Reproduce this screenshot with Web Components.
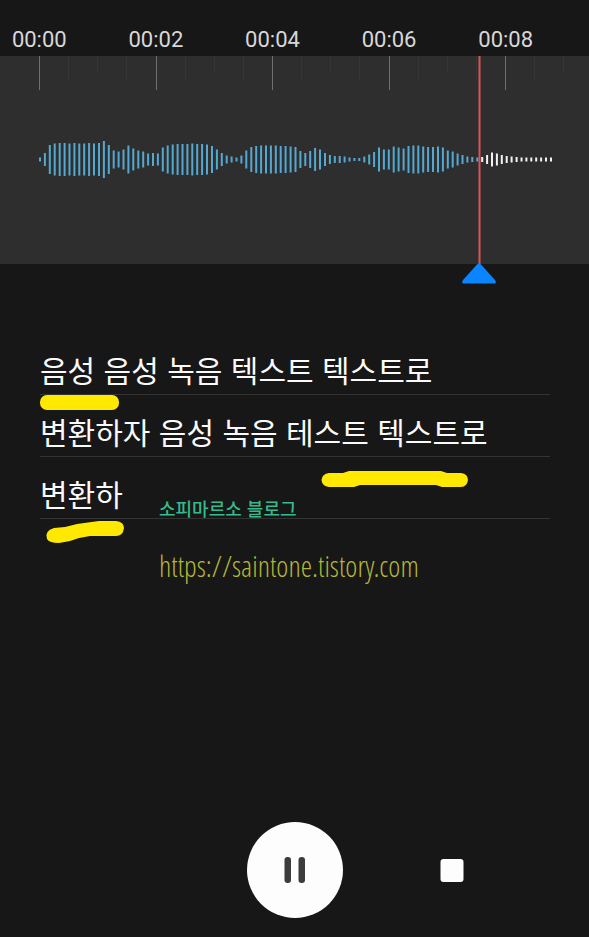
<!DOCTYPE html>
<html lang="ko">
<head>
<meta charset="utf-8">
<meta name="viewport" content="width=device-width, initial-scale=1">
<title>음성 녹음</title>
<style>
  html { background: #171717; }
  body { margin: 0; font-family: Roboto, "Noto Sans CJK KR", sans-serif; color: #fafafa; }
</style>
</head>
<body>
<voice-recorder></voice-recorder>

<script>
const define = (name, html, setup) => {
  const template = document.createElement('template');
  template.innerHTML = html;
  customElements.define(name, class extends HTMLElement {
    constructor() {
      super();
      this.attachShadow({ mode: 'open' }).append(template.content.cloneNode(true));
    }
    connectedCallback() { if (setup) setup(this, this.shadowRoot); }
  });
};

define('time-ruler', `
  <style>
    :host { display: block; overflow: hidden; }
    div { display: grid; grid-template-columns: repeat(5, 1fr); margin: 0 25px 0 -19px;
          padding-top: 24px; height: 32px; text-align: center; font-size: 22px; line-height: 32px; color: #d8d8d8; }
  </style>
  <div><span>00:00</span><span>00:02</span><span>00:04</span><span>00:06</span><span>00:08</span></div>
`);

define('wave-form', `
  <style>
    :host { display: block; position: relative; background: #2e2e2e; }
    .wave { display: block; width: 100%; height: 208px; }
    .handle { position: absolute; top: 100%; left: 81.4%; width: 34px; height: 21px; margin: -1px 0 0 -17px; }
  </style>
  <svg class="wave" viewBox="0 0 589 208" preserveAspectRatio="none" role="img" aria-label="파형">
    <path id="minor" stroke="#363636" fill="none"/>
    <path id="major" stroke="#6f6f6f" fill="none"/>
    <path id="played" stroke="#55a9d0" stroke-width="2" fill="none"/>
    <path id="rest" stroke="#f2f2f2" stroke-width="2" fill="none"/>
    <path d="M479.5 0V208" stroke="#d4555c" stroke-width="2"/>
  </svg>
  <svg class="handle" viewBox="0 0 34 21" aria-hidden="true">
    <path d="M15 1.4Q17 -.4 19 1.4L33 17Q35 20.5 32 20.5H2Q-1 20.5 1 17Z" fill="#0a84ff"/>
  </svg>
`, (host, root) => {
  const levels = [4,13,29,32,33,33,32,33,32,32,33,32,33,37,29,18,16,20,28,22,18,16,12,13,12,
    24,28,30,31,31,31,32,31,31,30,27,20,13,8,6,4,8,18,25,27,28,28,28,28,27,27,26,25,17,13,17,23,
    20,13,9,7,7,6,4,3,3,6,10,15,24,20,20,26,24,22,27,28,28,26,25,25,26,24,18,16,12,9,6,5,4,
    5,9,14,12,9,7,6,5,4,4,4,4,4,4,4];
  const current = 90;
  const bars = (list, from) => list.map((h, i) =>
    `M${(40 + (from + i) * 4.913).toFixed(1)} ${103.5 - h / 2}v${h}`).join('');
  root.getElementById('played').setAttribute('d', bars(levels.slice(0, current), 0));
  root.getElementById('rest').setAttribute('d', bars(levels.slice(current), current));
  let major = '', minor = '';
  for (let i = 0; i < 19; i++) {
    const x = Math.floor(39.5 + i * 29.125) + 0.5;
    if (i % 4 === 0) major += `M${x} 0v34`;
    else minor += `M${x} 0v${i % 2 ? 24 : 17}`;
  }
  root.getElementById('major').setAttribute('d', major);
  root.getElementById('minor').setAttribute('d', minor);
});

define('transcript-line', `
  <style>
    :host { display: block; box-sizing: border-box; min-height: 62px; padding-top: 14px;
            border-bottom: 1px solid #333; font: 30px/44px "Noto Sans CJK KR", sans-serif; color: #fafafa; }
  </style>
  <slot></slot>
`);

define('marker-strokes', `
  <style>
    :host { display: block; position: absolute; top: 1px; left: 0; pointer-events: none; }
    svg { display: block; width: 450px; height: 220px; }
  </style>
  <svg viewBox="0 0 450 220" aria-hidden="true" fill="#ffe900">
    <rect x="0" y="61" width="79" height="15" rx="7"/>
    <path d="M289 139H303L309 137H401L407 139H421Q428 140 428 146Q427 153 421 153H402L396 151H320L314 153H289Q282 152 281.500 146Q282 140 289 139Z"/>
    <path d="M14 194L25 193L37 190L59 187H76Q84 188 84 194Q83 202 76 202H50L39 204L30 207L19 209Q9 209 7 205Q4 197 14 194Z"/>
  </svg>
`);

define('blog-credit', `
  <style>
    :host { display: flex; flex-direction: column; align-items: flex-start; gap: 20px;
            position: absolute; top: 157px; left: 119px; white-space: nowrap; }
    span { font: 500 18px/36px "Noto Sans CJK KR", sans-serif; color: #36b98e; }
    a { font: 300 29px/40px "Open Sans Condensed Light", "Open Sans Condensed", "Noto Sans", sans-serif; color: #b4b636; text-decoration: none; }
  </style>
  <span>소피마르소 블로그</span>
  <a href="https://saintone.tistory.com">https://saintone.tistory.com</a>
`);

define('play-controls', `
  <style>
    :host { display: grid; grid-template-columns: 1fr auto 1fr; align-items: center; justify-items: center; padding: 0 28px 19px; }
    button { display: grid; place-items: center; border: 0; padding: 0; cursor: pointer; }
    .pause { grid-column: 2; width: 96px; height: 96px; border-radius: 50%; background: #fdfdfd; }
    .stop { width: 48px; height: 48px; background: none; }
    svg { display: block; }
  </style>
  <button class="pause" aria-label="일시정지">
    <svg width="22" height="28" viewBox="0 0 22 28" fill="#3c3c3c"><rect x="0.500" y="1" width="6.500" height="26" rx="3"/><rect x="14.500" y="1" width="6.500" height="26" rx="3"/></svg>
  </button>
  <button class="stop" aria-label="정지">
    <svg width="24" height="24" viewBox="0 0 24 24"><rect x="0.500" y="1" width="23" height="23" rx="3" fill="#fdfdfd"/></svg>
  </button>
`);

define('voice-recorder', `
  <style>
    :host { display: flex; flex-direction: column; min-height: 100vh; background: #171717; }
    main { position: relative; flex: 1; margin: 69px 39px 0 40px; }
  </style>
  <time-ruler></time-ruler>
  <wave-form></wave-form>
  <main>
    <transcript-line>음성 음성 녹음 텍스트 텍스트로</transcript-line>
    <transcript-line>변환하자 음성 녹음 테스트 텍스트로</transcript-line>
    <transcript-line>변환하</transcript-line>
    <marker-strokes></marker-strokes>
    <blog-credit></blog-credit>
  </main>
  <play-controls></play-controls>
`);
</script>
</body>
</html>
